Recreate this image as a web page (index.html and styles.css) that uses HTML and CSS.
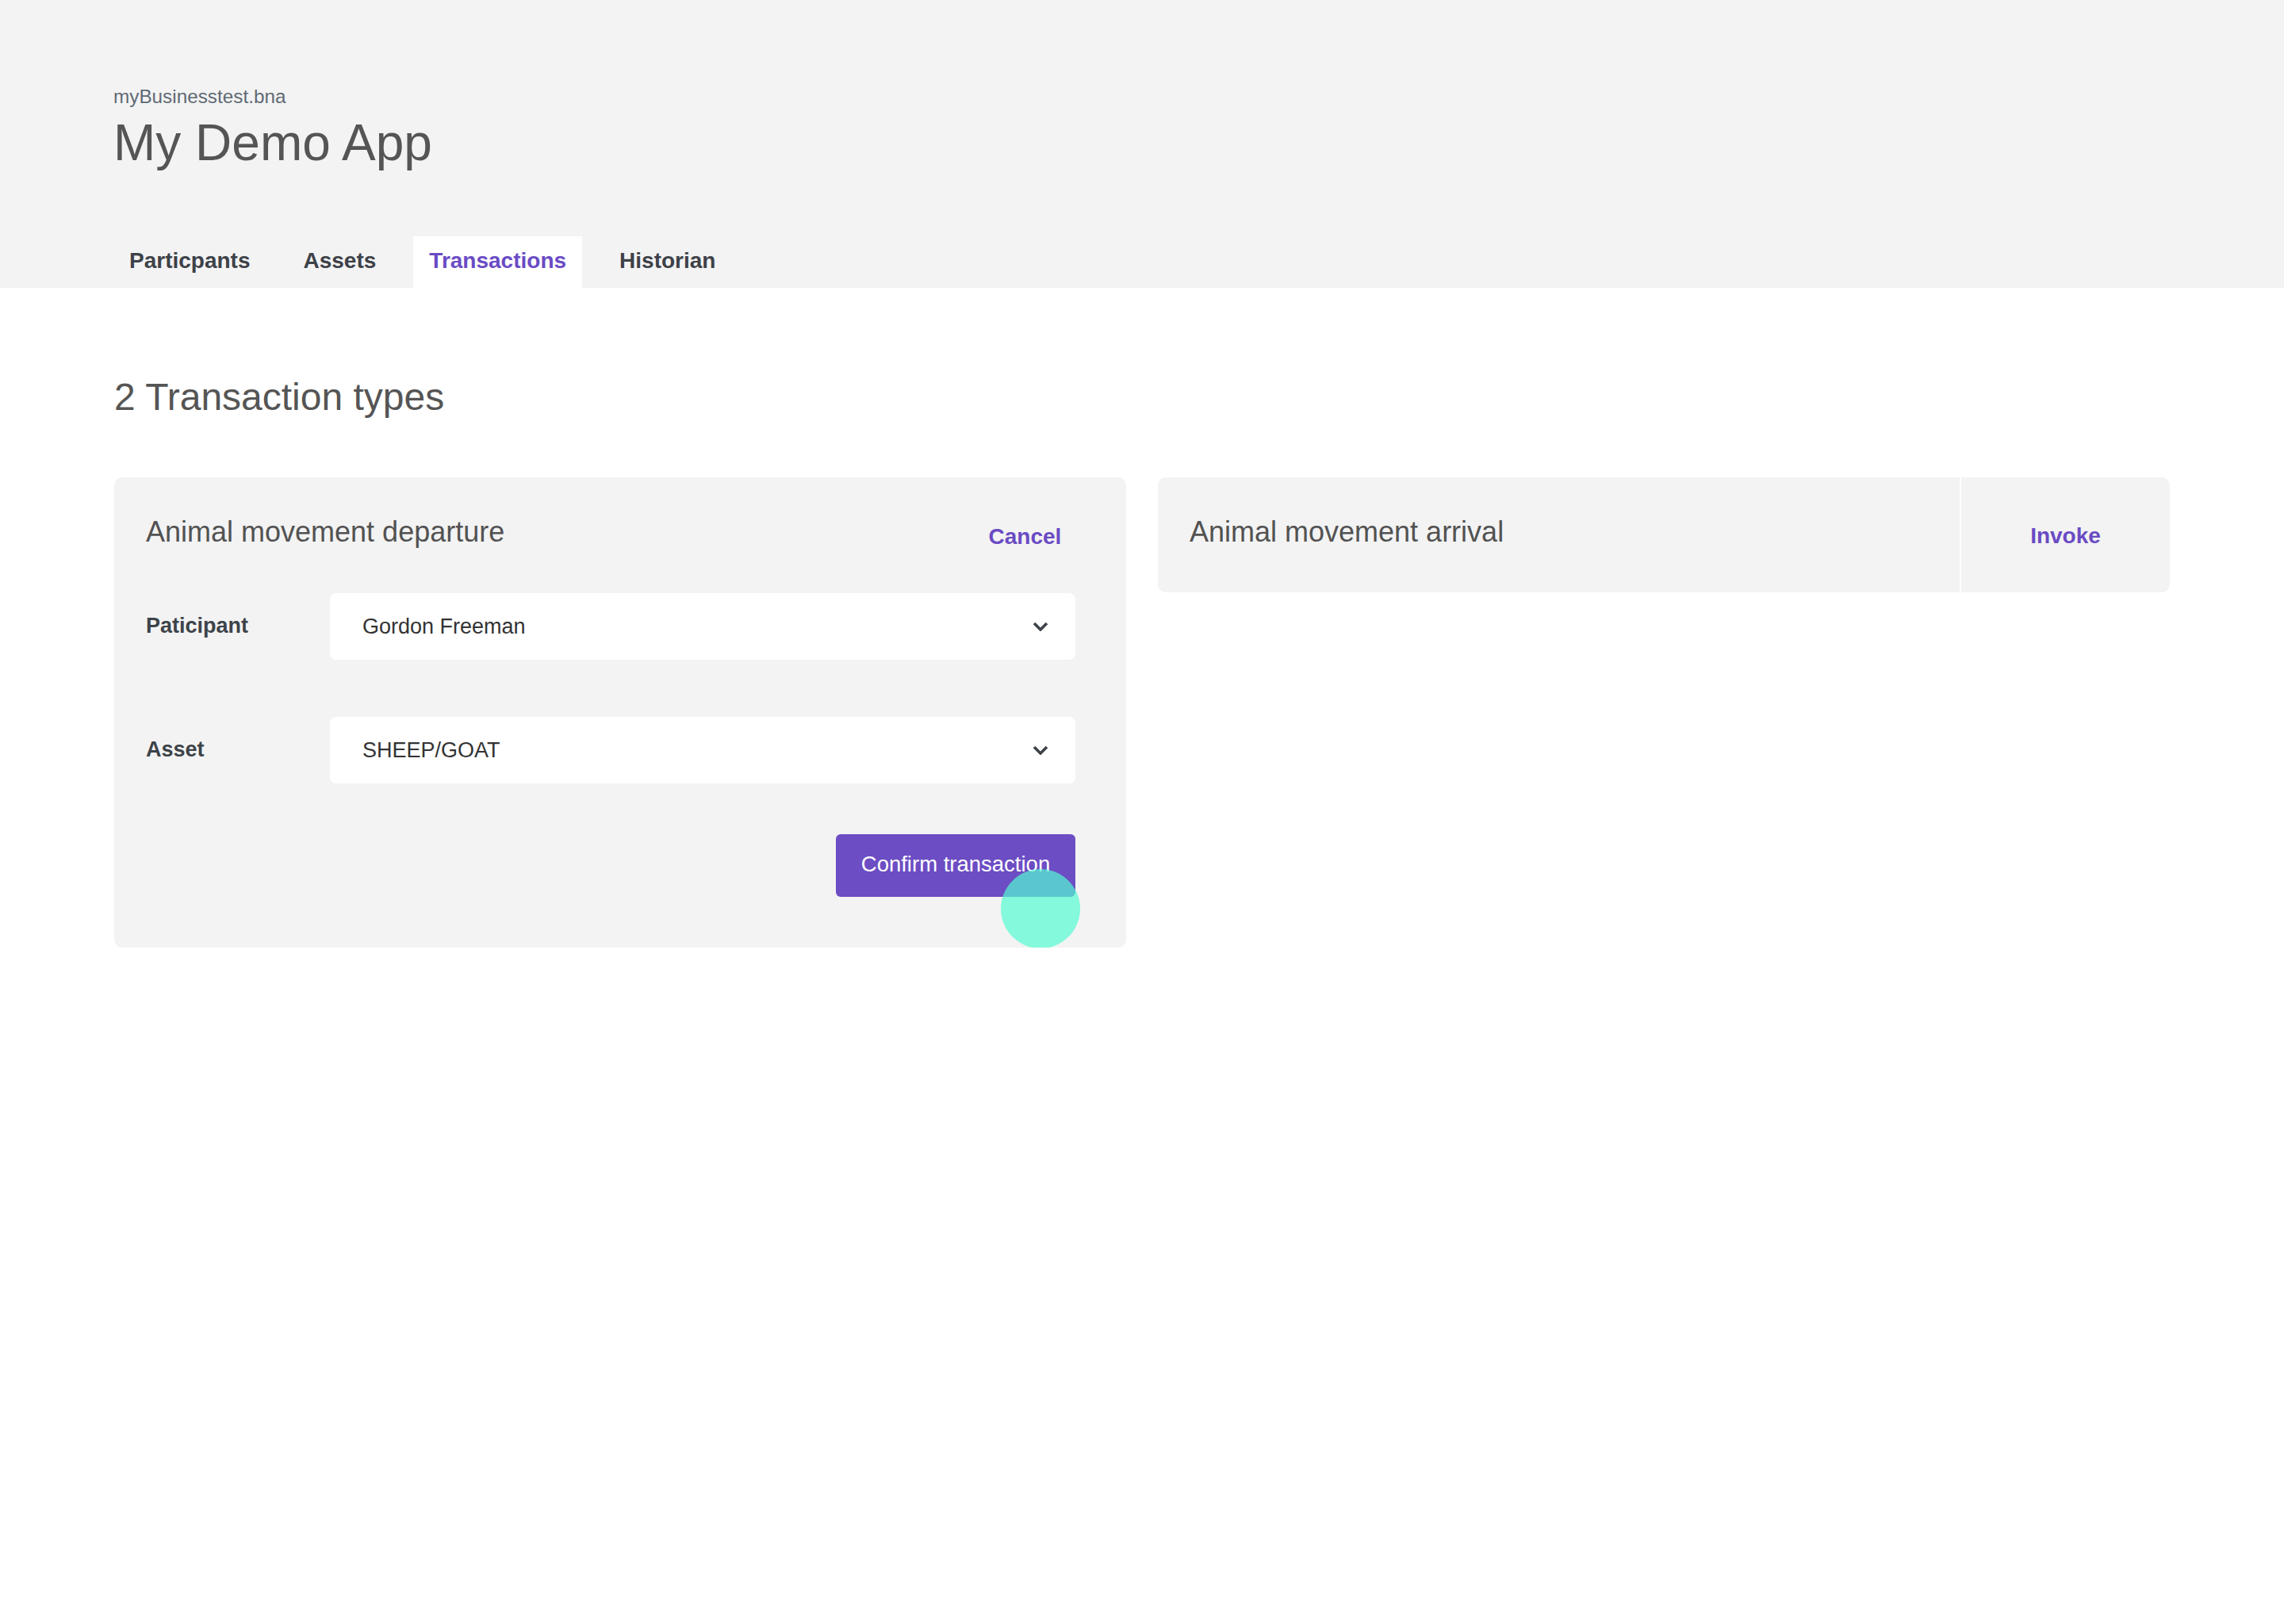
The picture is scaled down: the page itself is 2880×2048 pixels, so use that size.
FILE: index.html
```html
<!DOCTYPE html>
<html lang="en">
<head>
<meta charset="utf-8">
<title>My Demo App</title>
<link rel="stylesheet" href="styles.css">
</head>
<body>
<header class="app-header">
  <div class="app-sub">myBusinesstest.bna</div>
  <h1 class="app-title">My Demo App</h1>
  <nav class="tabs">
    <a class="tab">Particpants</a>
    <a class="tab">Assets</a>
    <a class="tab tab-active">Transactions</a>
    <a class="tab">Historian</a>
  </nav>
</header>
<main class="content">
  <h2 class="section-title">2 Transaction types</h2>
  <div class="cards">
    <section class="card">
      <div class="card-head">
        <div class="card-title">Animal movement departure</div>
        <div class="card-action card-action-cancel">Cancel</div>
      </div>
      <div class="card-body">
        <div class="field">
          <div class="field-label">Paticipant</div>
          <div class="select">
            <span>Gordon Freeman</span>
            <svg class="chev" width="20" height="12" viewBox="0 0 20 12"><polyline points="2,2 10,10 18,2" fill="none" stroke="#3d4349" stroke-width="3.6"/></svg>
          </div>
        </div>
        <div class="field">
          <div class="field-label">Asset</div>
          <div class="select">
            <span>SHEEP/GOAT</span>
            <svg class="chev" width="20" height="12" viewBox="0 0 20 12"><polyline points="2,2 10,10 18,2" fill="none" stroke="#3d4349" stroke-width="3.6"/></svg>
          </div>
        </div>
        <div class="actions">
          <button class="btn-primary">Confirm transaction</button>
        </div>
      </div>
      <div class="touch"></div>
    </section>
    <section class="card card-collapsed">
      <div class="card-head card-head-collapsed">
        <div class="card-title">Animal movement arrival</div>
        <div class="card-action card-action-divided">Invoke</div>
      </div>
    </section>
  </div>
</main>
</body>
</html>
```

FILE: styles.css
```css
* { box-sizing: border-box; }
body {
  margin: 0;
  background: #ffffff;
  font-family: "Liberation Sans", Arial, Helvetica, sans-serif;
  color: #3d4349;
}
.app-header {
  background: #f3f3f3;
  padding: 110px 144px 0 143px;
}
.app-sub {
  font-size: 24.3px;
  line-height: 24px;
  color: #5f6a75;
  margin-bottom: 14px;
}
.app-title {
  margin: 0;
  font-size: 64px;
  line-height: 64px;
  font-weight: 400;
  color: #555555;
}
.tabs {
  display: flex;
  gap: 27px;
  margin-top: 86px;
  height: 65px;
}
.tab {
  display: block;
  padding: 0 20px 4px 20px;
  line-height: 61px;
  font-size: 28px;
  font-weight: 700;
  color: #3d4148;
}
.tab-active {
  background: #ffffff;
  color: #6a4bc4;
}
.content {
  padding: 0 144px;
}
.section-title {
  margin: 114px 0 0 0;
  font-size: 48px;
  line-height: 48px;
  font-weight: 400;
  color: #555555;
}
.cards {
  margin-top: 77px;
  display: grid;
  grid-template-columns: 1fr 1fr;
  gap: 40px;
  align-items: start;
}
.card {
  position: relative;
  background: #f3f3f3;
  border-radius: 10px;
}
.card-head {
  display: flex;
  height: 146px;
}
.card-head-collapsed {
  height: 145px;
}
.card-title {
  flex: 1;
  display: flex;
  align-items: center;
  padding: 0 0 8px 40px;
  font-size: 36px;
  color: #525252;
}
.card-action {
  width: 265px;
  display: flex;
  align-items: center;
  justify-content: center;
  padding-top: 3px;
  font-size: 28px;
  font-weight: 700;
  color: #6a4bc4;
}
.card-action-cancel {
  padding-left: 10px;
}
.card-action-divided {
  border-left: 2px solid #ffffff;
}
.card-body {
  padding: 0 64px 64px 40px;
  display: flex;
  flex-direction: column;
  gap: 72px;
}
.field {
  display: grid;
  grid-template-columns: 232px 1fr;
  align-items: center;
}
.field-label {
  font-size: 27px;
  font-weight: 700;
  color: #3d4349;
  padding-bottom: 2px;
}
.select {
  height: 84px;
  background: #ffffff;
  border-radius: 8px;
  display: flex;
  align-items: center;
  justify-content: space-between;
  padding: 0 34px 0 41px;
  font-size: 27px;
  color: #333333;
}
.chev { display: block; }
.actions {
  display: flex;
  justify-content: flex-end;
  margin-top: -8px;
}
.btn-primary {
  height: 79px;
  width: 302px;
  border: 0;
  border-radius: 6px;
  background: #6c4dc4;
  color: #ffffff;
  font-family: "Liberation Sans", Arial, sans-serif;
  font-size: 27.5px;
  padding: 0 0 4px 0;
}
.touch {
  position: absolute;
  left: 1118px;
  top: 494px;
  width: 100px;
  height: 100px;
  border-radius: 50%;
  background: rgba(82, 252, 208, 0.69);
}
```
